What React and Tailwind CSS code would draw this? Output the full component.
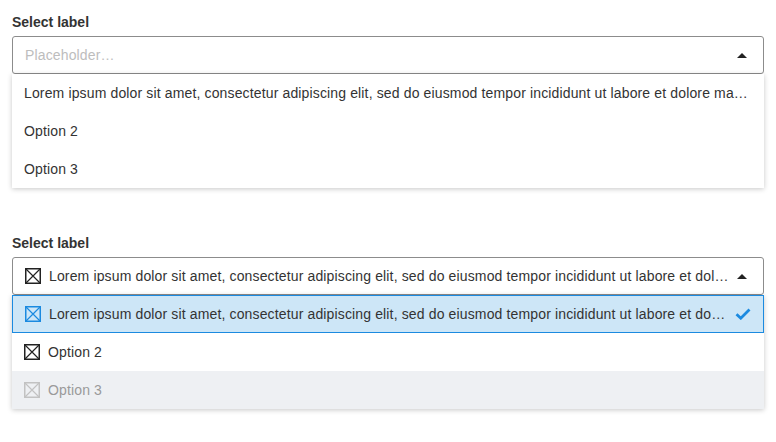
import { useState } from 'react';

const LOREM =
  "Lorem ipsum dolor sit amet, consectetur adipiscing elit, sed do eiusmod tempor incididunt ut labore et dolore magna aliqua.";

const Caret = () => (
  <svg width="10" height="5" viewBox="0 0 10 5" className="shrink-0">
    <path d="M0 5 L5 0 L10 5 Z" fill="#222" />
  </svg>
);

const Check = () => (
  <svg width="16" height="12" viewBox="0 0 16 12" className="shrink-0">
    <path d="M1.5 6.2 L5.8 10.2 L14.5 1.5" fill="none" stroke="#1b8ae0" strokeWidth="2.8" />
  </svg>
);

const BoxIcon = ({ color }) => (
  <svg width="16" height="16" viewBox="0 0 16 16" className="shrink-0">
    <rect x="0.75" y="0.75" width="14.5" height="14.5" fill="none" stroke={color} strokeWidth="1.5" />
    <path d="M1 1 L15 15 M15 1 L1 15" stroke={color} strokeWidth="1.2" />
  </svg>
);

const rowBase = "h-[38px] flex items-center px-3 text-sm tracking-[0.14px]";

const SimpleSelect = () => (
  <div className="flex flex-col">
    <label className="h-5 leading-5 text-sm font-bold text-[#333] mb-1">Select label</label>
    <div className="h-[38px] border border-[#8c8c8c] rounded-[3px] flex items-center pl-3 pr-4 gap-3">
      <span className="flex-1 text-sm tracking-[0.14px] text-[#bdbdbd] truncate">Placeholder…</span>
      <Caret />
    </div>
    <div className="bg-white shadow-[0_1px_5px_rgba(0,0,0,0.22)]">
      <div className={`${rowBase} text-[#333]`}>
        <span className="truncate">{LOREM}</span>
      </div>
      <div className={`${rowBase} text-[#333]`}>Option 2</div>
      <div className={`${rowBase} text-[#333]`}>Option 3</div>
    </div>
  </div>
);

const IconSelect = () => {
  const [selected] = useState(0);
  return (
    <div className="flex flex-col">
      <label className="h-5 leading-5 text-sm font-bold text-[#333] mb-1">Select label</label>
      <div className="h-[38px] border border-[#8c8c8c] rounded-[3px] flex items-center pl-3 pr-4 gap-2">
        <BoxIcon color="#222" />
        <span className="flex-1 text-sm tracking-[0.14px] text-[#333] truncate">{LOREM}</span>
        <Caret />
      </div>
      <div className="bg-white shadow-[0_1px_5px_rgba(0,0,0,0.22)]">
        <div
          className={`${rowBase} gap-2 text-[#333] ${selected === 0 ? "bg-[#cde6f7] border border-[#1b8ae0]" : ""}`}
        >
          <BoxIcon color="#1b8ae0" />
          <span className="flex-1 truncate">{LOREM}</span>
          <Check />
        </div>
        <div className={`${rowBase} gap-2 text-[#333]`}>
          <BoxIcon color="#222" />
          <span>Option 2</span>
        </div>
        <div className={`${rowBase} gap-2 bg-[#eef0f3] text-[#9a9a9a]`}>
          <BoxIcon color="#c2c2c2" />
          <span>Option 3</span>
        </div>
      </div>
    </div>
  );
};

export default function App() {
  return (
    <div className="w-[776px] h-[442px] bg-white px-3 pt-3 flex flex-col gap-[45px] font-['Liberation_Sans',Arial,sans-serif]">
      <SimpleSelect />
      <IconSelect />
    </div>
  );
}
